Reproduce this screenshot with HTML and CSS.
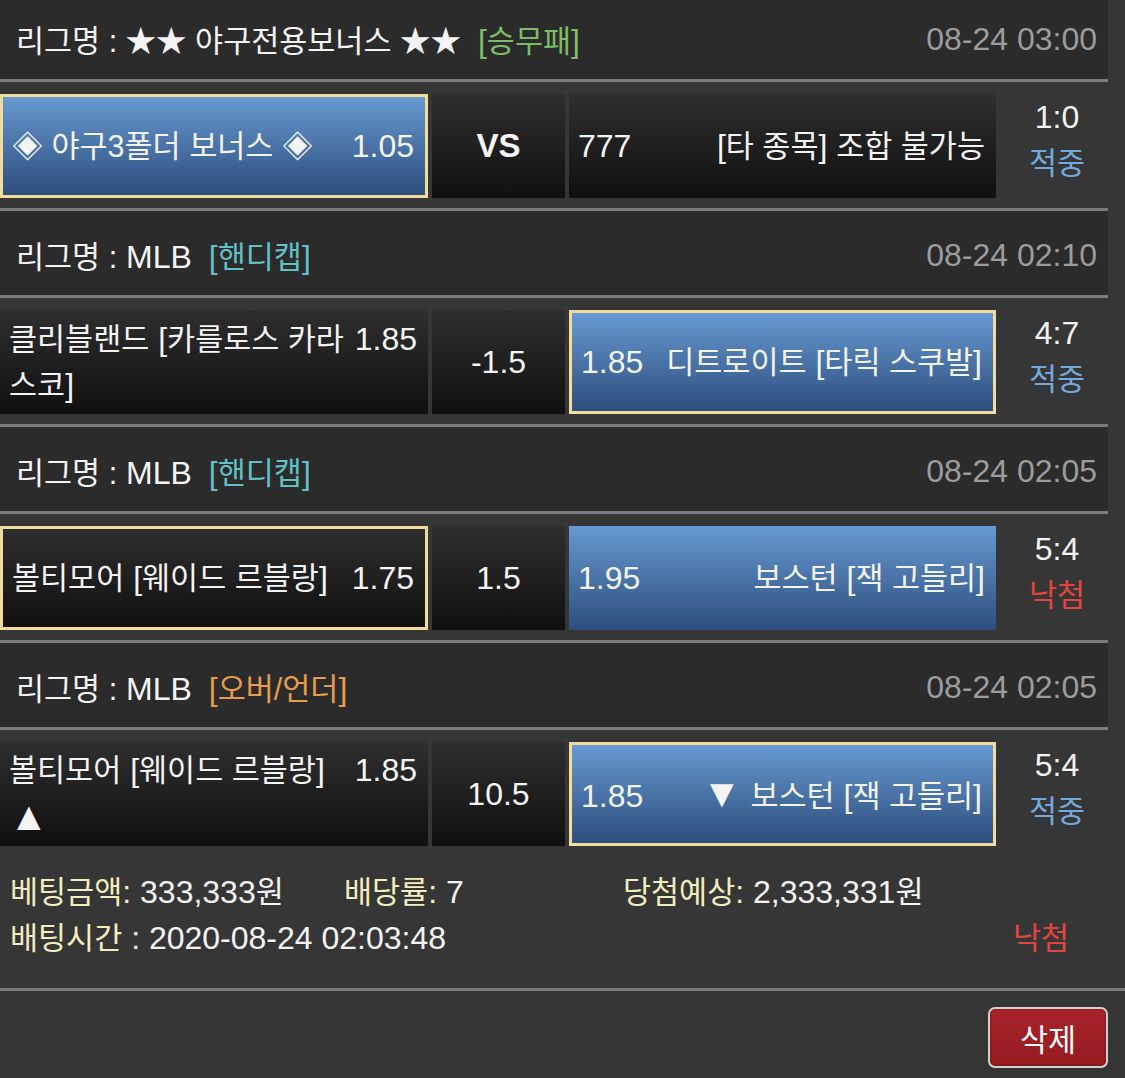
FILE: index.html
```html
<!DOCTYPE html>
<html lang="ko">
<head>
<meta charset="utf-8">
<title>배팅내역</title>
<link rel="stylesheet" href="styles.css">
</head>
<body>
<div class="slip">
  <section class="game">
    <div class="league">
      <div class="league-name"><span class="k">리그명 : ★★ 야구전용보너스 ★★</span><span class="tag tag-green">[<span class="k">승무패</span>]</span></div>
      <div class="time">08-24 03:00</div>
    </div>
    <div class="match">
      <div class="cell side home blue selected">
        <div class="line"><span class="name"><span class="k">◈ 야구3폴더 보너스 ◈</span></span><span class="odds">1.05</span></div>
      </div>
      <div class="cell mid"><b>VS</b></div>
      <div class="cell side away">
        <div class="line"><span class="odds">777</span><span class="name">[<span class="k">타 종목</span>] <span class="k">조합 불가능</span></span></div>
      </div>
      <div class="result"><div class="score">1:0</div><div class="k hit">적중</div></div>
    </div>
  </section>

  <section class="game">
    <div class="league">
      <div class="league-name"><span class="k">리그명 :</span> MLB<span class="tag tag-teal">[<span class="k">핸디캡</span>]</span></div>
      <div class="time">08-24 02:10</div>
    </div>
    <div class="match">
      <div class="cell side home">
        <div class="line"><span class="name"><span class="k">클리블랜드</span> [<span class="k">카를로스 카라스코</span>]</span><span class="odds">1.85</span></div>
      </div>
      <div class="cell mid">-1.5</div>
      <div class="cell side away blue selected">
        <div class="line"><span class="odds">1.85</span><span class="name"><span class="k">디트로이트</span> [<span class="k">타릭 스쿠발</span>]</span></div>
      </div>
      <div class="result"><div class="score">4:7</div><div class="k hit">적중</div></div>
    </div>
  </section>

  <section class="game">
    <div class="league">
      <div class="league-name"><span class="k">리그명 :</span> MLB<span class="tag tag-teal">[<span class="k">핸디캡</span>]</span></div>
      <div class="time">08-24 02:05</div>
    </div>
    <div class="match">
      <div class="cell side home selected">
        <div class="line"><span class="name"><span class="k">볼티모어</span> [<span class="k">웨이드 르블랑</span>]</span><span class="odds">1.75</span></div>
      </div>
      <div class="cell mid">1.5</div>
      <div class="cell side away blue">
        <div class="line"><span class="odds">1.95</span><span class="name"><span class="k">보스턴</span> [<span class="k">잭 고들리</span>]</span></div>
      </div>
      <div class="result"><div class="score">5:4</div><div class="k miss">낙첨</div></div>
    </div>
  </section>

  <section class="game last">
    <div class="league">
      <div class="league-name"><span class="k">리그명 :</span> MLB<span class="tag tag-orange">[<span class="k">오버/언더</span>]</span></div>
      <div class="time">08-24 02:05</div>
    </div>
    <div class="match">
      <div class="cell side home">
        <div class="line"><span class="name"><span class="k">볼티모어</span> [<span class="k">웨이드 르블랑</span>] <span class="arrow">▲</span></span><span class="odds">1.85</span></div>
      </div>
      <div class="cell mid">10.5</div>
      <div class="cell side away blue selected">
        <div class="line"><span class="odds">1.85</span><span class="name"><span class="arrow">▼</span> <span class="k">보스턴</span> [<span class="k">잭 고들리</span>]</span></div>
      </div>
      <div class="result"><div class="score">5:4</div><div class="k hit">적중</div></div>
    </div>
  </section>
</div>

<div class="summary">
  <div class="sum-row">
    <div class="c1"><span class="label"><span class="k">베팅금액</span>:</span> 333,333<span class="k">원</span></div>
    <div class="c2"><span class="label"><span class="k">배당률</span>:</span> 7</div>
    <div class="c3"><span class="label"><span class="k">당첨예상</span>:</span> 2,333,331<span class="k">원</span></div>
  </div>
  <div class="sum-row sum-row2">
    <div><span class="label k">배팅시간</span> : 2020-08-24 02:03:48</div>
    <div class="k miss total">낙첨</div>
  </div>
</div>

<div class="actions">
  <button class="delete" type="button">삭제</button>
</div>
</body>
</html>
```

FILE: styles.css
```css
* {
  box-sizing: border-box;
}

html,
body {
  margin: 0;
  padding: 0;
}

body {
  width: 1125px;
  height: 1078px;
  overflow: hidden;
  background: #363636;
  color: #f4f4f4;
  font-family: "Liberation Sans", "Noto Sans CJK KR", sans-serif;
  font-size: 32px;
}

.k {
  font-size: 30.5px;
}

.slip {
  width: 1108px;
  margin-top: -5px;
}

.league {
  height: 87px;
  background: #2b2b2b;
  border-bottom: 3px solid #7b7b7b;
  display: flex;
  align-items: center;
  justify-content: space-between;
  padding: 4px 11px 0 16px;
  white-space: nowrap;
}

.tag {
  margin-left: 17px;
}

.tag-green {
  color: #7dbd66;
}

.tag-teal {
  color: #62c1c4;
}

.tag-orange {
  color: #e69c4b;
}

.time {
  color: #9c9c9c;
}

.match {
  display: flex;
  gap: 4px;
  height: 129px;
  padding: 12px 0 10px;
  border-bottom: 3px solid #7b7b7b;
}

.game.last .match {
  border-bottom: none;
  height: 126px;
}

.cell {
  height: 104px;
  display: flex;
  align-items: center;
  line-height: 46px;
  background: linear-gradient(#2e2e2e, #101010);
}

.cell.blue {
  background: linear-gradient(#6799d1, #2d4e7d);
}

.cell.selected {
  border: 3px solid #f1dc9f;
}

.side {
  padding: 0 11px 0 9px;
}

.home {
  width: 428px;
}

.away {
  width: 427px;
}

.mid {
  width: 133px;
  justify-content: center;
}

.mid b {
  font-weight: bold;
  font-size: 33px;
}

.line {
  display: flex;
  align-items: baseline;
  width: 100%;
  gap: 4px;
}

.name {
  flex: 1;
  min-width: 0;
}

.away .name {
  text-align: right;
}

.odds {
  flex: none;
}

.arrow {
  font-size: 40px;
}

.result {
  width: 108px;
  height: 104px;
  display: flex;
  flex-direction: column;
  align-items: center;
  justify-content: center;
  padding: 0 0 12px 6px;
  line-height: 46px;
}

.hit {
  color: #72a9dd;
}

.miss {
  color: #e0463e;
}

.summary {
  width: 1125px;
  height: 135px;
  padding: 13px 0 0 10px;
  border-bottom: 3px solid #7b7b7b;
  line-height: 46px;
}

.sum-row {
  display: flex;
  white-space: nowrap;
}

.c1 {
  width: 334px;
}

.c2 {
  width: 279px;
}

.label {
  color: #f3eebf;
}

.sum-row2 {
  justify-content: space-between;
}

.total {
  margin-right: 56px;
}

.actions {
  display: flex;
  justify-content: flex-end;
  padding: 16px 17px 0 0;
}

.delete {
  width: 120px;
  height: 61px;
  border: 2px solid #d2d2d2;
  border-radius: 7px;
  background: linear-gradient(#a9232a, #951b20);
  box-shadow: inset 0 0 2px rgba(0, 0, 0, 0.5);
  color: #ffffff;
  font-family: "Liberation Sans", "Noto Sans CJK KR", sans-serif;
  font-size: 30.5px;
  padding: 0;
}
```
